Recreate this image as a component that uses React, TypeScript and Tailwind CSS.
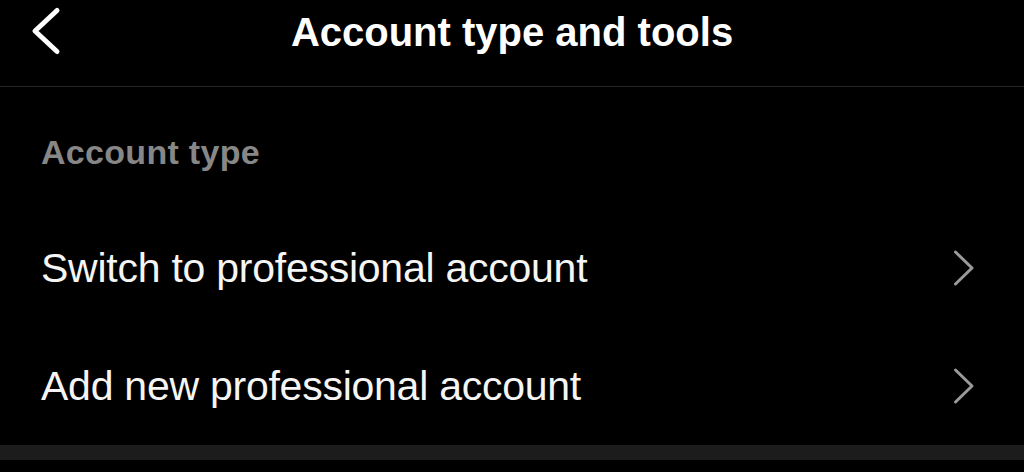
import React from "react";

const font = { fontFamily: '"Liberation Sans", Arial, sans-serif' };

function ChevronRight() {
  return (
    <svg width="24" height="38" viewBox="0 0 24 38" className="shrink-0">
      <polyline
        points="3.5,3 20,19 3.5,35"
        fill="none"
        stroke="#9a9a9a"
        strokeWidth="3"
        strokeLinecap="round"
        strokeLinejoin="round"
      />
    </svg>
  );
}

function Row({ label }: { label: string }) {
  return (
    <div className="flex h-[118px] items-center justify-between pl-[41px] pr-[48px]">
      <span className="text-[41px] leading-[48px] tracking-[-0.25px] text-[#f5f5f5]">{label}</span>
      <ChevronRight />
    </div>
  );
}

export default function App() {
  return (
    <div className="flex h-[472px] w-[1024px] flex-col overflow-hidden bg-black" style={font}>
      <div className="relative flex h-[86px] shrink-0 items-center justify-center border-b border-[#262626] box-content">
        <div className="absolute left-[30px] top-[6px]">
          <svg width="34" height="50" viewBox="0 0 34 50">
            <polyline
              points="27,4.5 5,25 27,45.5"
              fill="none"
              stroke="#ffffff"
              strokeWidth="5"
              strokeLinecap="round"
              strokeLinejoin="round"
            />
          </svg>
        </div>
        <h1 className="-mt-[22px] text-[40px] font-bold leading-[48px] text-white">Account type and tools</h1>
      </div>
      <div className="pl-[41px] pt-[45px] pb-[37px]">
        <span className="text-[34px] font-bold leading-[40px] tracking-[0.3px] text-[#878787]">Account type</span>
      </div>
      <Row label="Switch to professional account" />
      <Row label="Add new professional account" />
      <div className="h-[15px] shrink-0 bg-[#1c1c1c]" />
      <div className="flex-1 bg-black" />
    </div>
  );
}
